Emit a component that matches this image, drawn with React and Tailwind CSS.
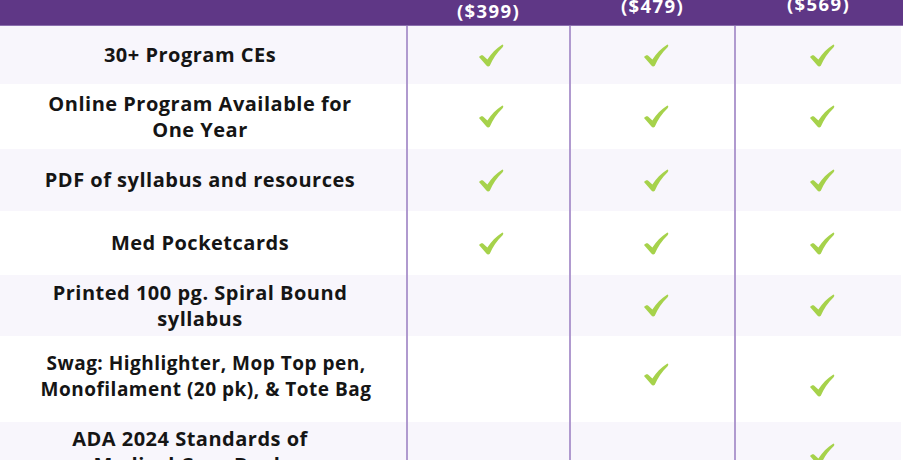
import React from 'react';

const ROWS = [
  { label: ['30+ Program CEs'], h: 'h-[58px]', alt: true, checks: [true, true, true], pad: 'pr-[26px]' },
  { label: ['Online Program Available for', 'One Year'], h: 'h-[65px]', alt: false, checks: [true, true, true] },
  { label: ['PDF of syllabus and resources'], h: 'h-[62px]', alt: true, checks: [true, true, true] },
  { label: ['Med Pocketcards'], h: 'h-[64px]', alt: false, checks: [true, true, true] },
  { label: ['Printed 100 pg. Spiral Bound', 'syllabus'], h: 'h-[61px]', alt: true, checks: [false, true, true] },
  { label: ['Swag: Highlighter, Mop Top pen,', 'Monofilament (20 pk), & Tote Bag'], h: 'h-[86px]', alt: false, checks: [false, 'up', 'down'], textCls: 'justify-center -mt-[6px] text-[19px]', pad: 'pl-[6px]' },
  { label: ['ADA 2024 Standards of', 'Medical Care Book'], h: 'h-[86px]', alt: true, checks: [false, false, 'ada'], textCls: 'justify-start pt-[4px]', pad: 'pr-[26px]' },
];

const shift = { true: '', up: '-mt-[9px]', down: 'mt-[13px]', ada: '-mt-[22px]' };

const Check = ({ cls = '' }) => (
  <svg width="26" height="23" viewBox="0 0 26 23" className={cls}>
    <path d="M1 13 C2.6 11.2 4 10.8 5 11.6 L9.4 15.6 C13.2 9.8 18 4.6 24.4 0.6 C25.6 1.2 25.6 2.2 24.6 3.2 C18.8 8.8 14.8 14.6 11.8 21.8 C10.8 22.8 9.4 22.8 8.4 21.6 Z" fill="#a6d24b" />
  </svg>
);

const Head = ({ text, cls }) => (
  <div className={`flex justify-center ${cls}`}>
    <span className="text-white font-bold text-[18.5px] tracking-[1.4px] leading-none">{text}</span>
  </div>
);

export default function App() {
  return (
    <div className="w-[903px] h-[460px] overflow-hidden bg-white" style={{ fontFamily: '"Open Sans", "Noto Sans", sans-serif' }}>
      <div className="h-[26px] bg-[#5f3786] border-b border-[#8b6fae] grid grid-cols-[406px_163px_165px_1fr] overflow-hidden">
        <div />
        <Head text="($399)" cls="pl-[2px] pt-[2px]" />
        <Head text="($479)" cls="pl-[2px] -mt-[3px]" />
        <Head text="($569)" cls="-mt-[5px]" />
      </div>
      <div className="pr-[2px]">
        {ROWS.map((r, i) => (
          <div key={i} className={`grid grid-cols-[406px_163px_165px_1fr] ${r.h} ${r.alt ? 'bg-[#f8f6fc]' : 'bg-white'}`}>
            <div className={`flex flex-col items-center text-center leading-[26px] font-bold tracking-[0.5px] text-[#151515] ${r.pad || 'pr-[6px]'} ${r.textCls || 'justify-center text-[20px]'} ${r.textCls && !r.textCls.includes('text-[') ? 'text-[20px]' : ''}`}>
              {r.label.map((l, k) => <div key={k} className="whitespace-nowrap">{l}</div>)}
            </div>
            {r.checks.map((c, k) => (
              <div key={k} className={`border-l-2 border-[#b09acf] flex items-center justify-center ${k === 0 ? 'pl-[4px]' : 'pl-[6px]'}`}>
                {c && <Check cls={shift[c]} />}
              </div>
            ))}
          </div>
        ))}
      </div>
    </div>
  );
}
